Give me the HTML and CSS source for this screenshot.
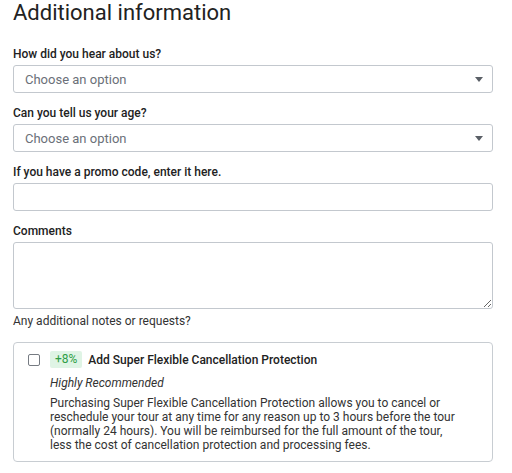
FILE: index.html
```html
<!DOCTYPE html>
<html lang="en">
<head>
  <meta charset="UTF-8">
  <meta name="viewport" content="width=device-width, initial-scale=1.0">
  <title>Additional information</title>
  <link rel="stylesheet" href="styles.css">
</head>
<body>
  <div class="container">
    <h2 class="title">Additional information</h2>

    <div class="field">
      <label class="label" for="hear">How did you hear about us?</label>
      <div class="select">
        <span class="placeholder">Choose an option</span>
        <span class="arrow"></span>
      </div>
    </div>

    <div class="field">
      <label class="label" for="age">Can you tell us your age?</label>
      <div class="select">
        <span class="placeholder">Choose an option</span>
        <span class="arrow"></span>
      </div>
    </div>

    <div class="field">
      <label class="label" for="promo">If you have a promo code, enter it here.</label>
      <input type="text" id="promo" class="input">
    </div>

    <div class="field">
      <label class="label" for="comments">Comments</label>
      <textarea id="comments" class="textarea"></textarea>
      <div class="hint">Any additional notes or requests?</div>
    </div>

    <div class="protection">
      <div class="protection-head">
        <span class="checkbox"></span>
        <span class="badge">+8%</span>
        <span class="protection-title">Add Super Flexible Cancellation Protection</span>
      </div>
      <div class="protection-body">
        <div class="recommended">Highly Recommended</div>
        <p class="desc">Purchasing Super Flexible Cancellation Protection allows you to cancel or reschedule your tour at any time for any reason up to 3 hours before the tour (normally 24 hours). You will be reimbursed for the full amount of the tour, less the cost of cancellation protection and processing fees.</p>
      </div>
    </div>
  </div>
</body>
</html>
```

FILE: styles.css
```css
body {
  margin: 0;
  font-family: Roboto, "Liberation Sans", Arial, sans-serif;
  color: #222;
  background: #fff;
}
.container {
  width: 480px;
  margin-left: 13px;
}
.title {
  font-size: 22px;
  font-weight: 400;
  line-height: 26px;
  margin: 0 0 21px 0;
  color: #222;
}
.field {
  margin-bottom: 13px;
}
.label {
  display: block;
  font-size: 12px;
  font-weight: 500;
  line-height: 14px;
  margin-bottom: 4px;
  color: #222;
}
.select {
  box-sizing: border-box;
  height: 28px;
  border: 1px solid #c3c8ce;
  border-radius: 3px;
  display: flex;
  align-items: center;
  justify-content: space-between;
  padding: 0 9px 0 11px;
}
.placeholder {
  font-size: 13px;
  color: #6b7079;
}
.arrow {
  width: 0;
  height: 0;
  border-left: 4px solid transparent;
  border-right: 4px solid transparent;
  border-top: 5px solid #5a5f66;
}
.input {
  display: block;
  box-sizing: border-box;
  width: 100%;
  height: 28px;
  border: 1px solid #c3c8ce;
  border-radius: 3px;
  margin: 0;
}
.textarea {
  display: block;
  box-sizing: border-box;
  width: 100%;
  height: 67px;
  border: 1px solid #c3c8ce;
  border-radius: 3px;
  margin: 0;
  font-family: inherit;
}
.hint {
  font-size: 12px;
  line-height: 14px;
  margin-top: 5px;
  color: #333;
}
.protection {
  box-sizing: border-box;
  border: 1px solid #c8cdd2;
  border-radius: 4px;
  padding: 8px 28px 9px 14px;
  margin-top: 14px;
}
.protection-head {
  display: flex;
  align-items: center;
  height: 17px;
}
.checkbox {
  box-sizing: border-box;
  width: 12px;
  height: 12px;
  border: 1px solid #767b82;
  border-radius: 2px;
  margin-right: 10px;
}
.badge {
  background: #dff4e5;
  color: #2e9e46;
  font-size: 12px;
  line-height: 17px;
  padding: 0 5px;
  border-radius: 2px;
  margin-right: 6px;
}
.protection-title {
  font-size: 12px;
  font-weight: 500;
  color: #222;
}
.protection-body {
  padding-left: 22px;
}
.recommended {
  font-size: 12px;
  font-style: italic;
  line-height: 14px;
  margin-top: 8px;
  color: #333;
}
.desc {
  font-size: 12px;
  line-height: 14px;
  margin: 6px 0 0 0;
  color: #333;
}
```
